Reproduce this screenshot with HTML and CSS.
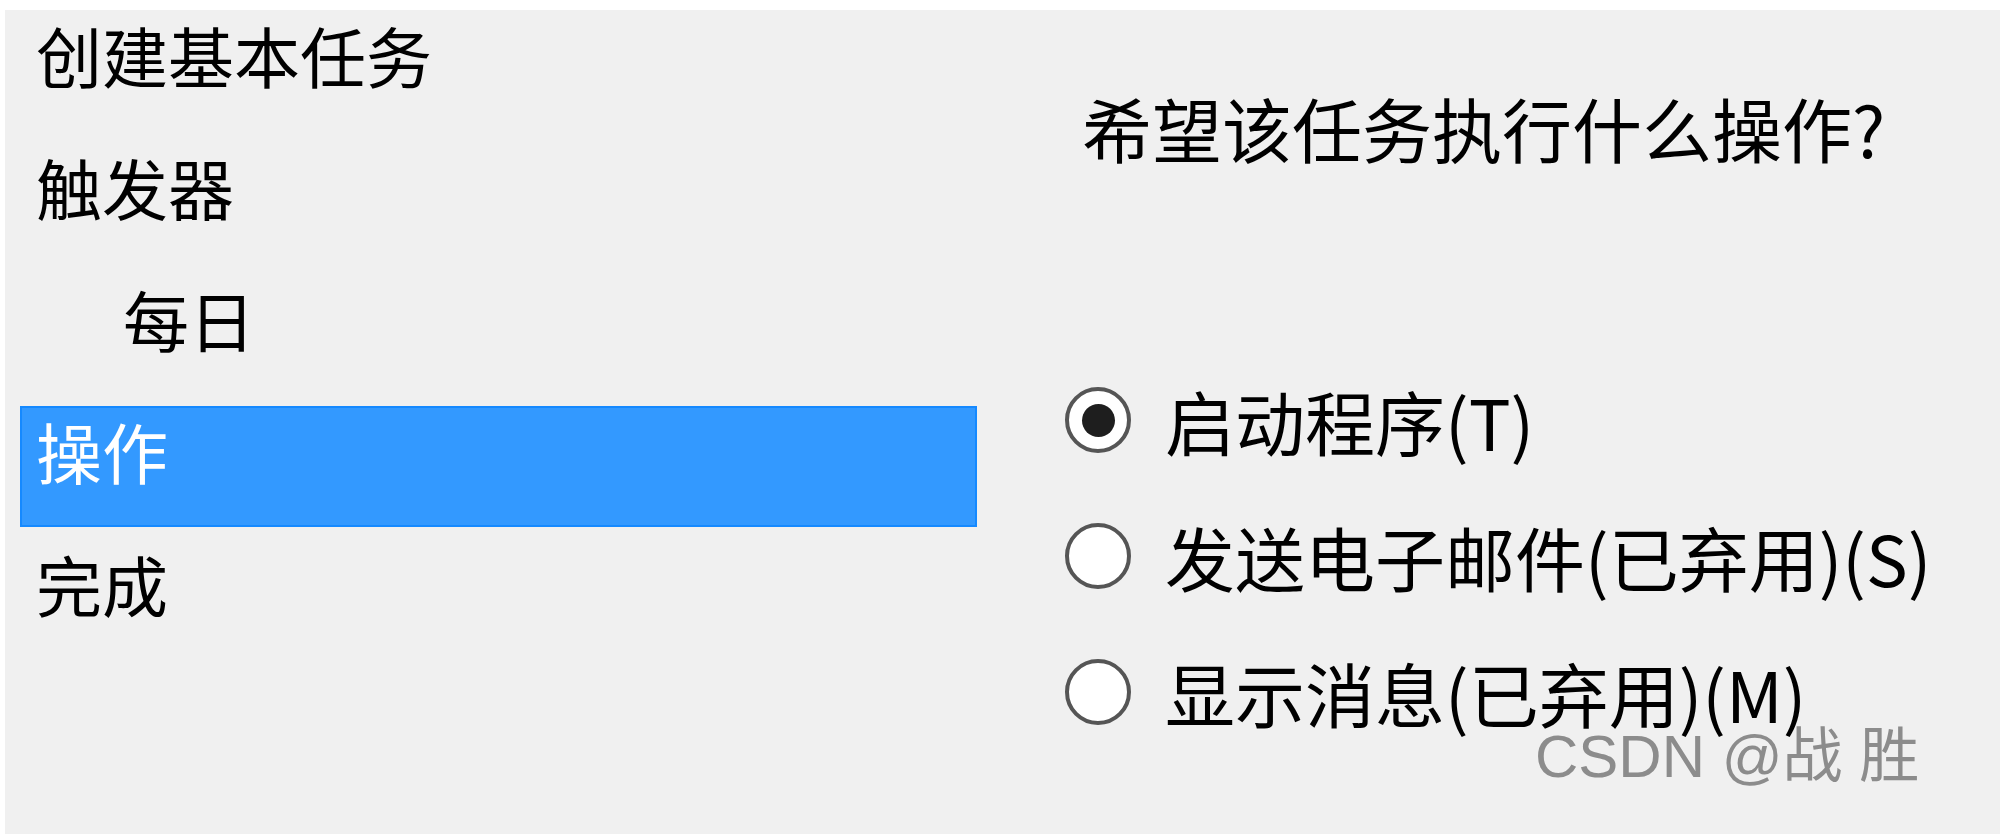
FILE: index.html
```html
<!DOCTYPE html>
<html lang="zh-CN">
<head>
    <meta charset="UTF-8">
    <meta name="viewport" content="width=device-width, initial-scale=1.0">
    <title>创建基本任务向导</title>
    <link rel="stylesheet" href="styles.css">
</head>
<body>
    <div class="window">
        <ul class="steps">
            <li class="step first">创建基本任务</li>
            <li class="step">触发器</li>
            <li class="step sub">每日</li>
            <li class="step active">操作</li>
            <li class="step after">完成</li>
        </ul>
        <div class="content">
            <h1 class="question">希望该任务执行什么操作?</h1>
            <div class="options">
                <label class="option">
                    <span class="radio checked"></span>
                    <span>启动程序(T)</span>
                </label>
                <label class="option">
                    <span class="radio"></span>
                    <span>发送电子邮件(已弃用)(S)</span>
                </label>
                <label class="option">
                    <span class="radio"></span>
                    <span>显示消息(已弃用)(M)</span>
                </label>
            </div>
        </div>
        <div class="watermark">CSDN @战 胜</div>
    </div>
</body>
</html>
```

FILE: styles.css
```css
body {
    margin: 0;
    background-color: #ffffff;
    font-family: "Noto Sans CJK SC", "Noto Sans", sans-serif;
    color: #000000;
    overflow: hidden;
}

.window {
    position: relative;
    display: flex;
    height: 824px;
    margin: 10px 0 0 5px;
    background-color: #f0f0f0;
    overflow: hidden;
}

.steps {
    list-style: none;
    width: 957px;
    margin: 0;
    padding: 0 0 0 15px;
    font-size: 66px;
}

.step {
    display: flex;
    align-items: center;
    height: 132px;
    padding-left: 16px;
    box-sizing: border-box;
    white-space: nowrap;
}

.step.first {
    height: 110px;
    padding-bottom: 22px;
}

.step.sub {
    padding-left: 103px;
}

.step.active {
    align-items: flex-start;
    height: 121px;
    margin-top: 22px;
    line-height: 84px;
    color: #ffffff;
    background-color: #3399ff;
    border: 2px solid #1589ff;
    padding-left: 14px;
}

.step.after {
    height: 112px;
}

.content {
    padding: 78px 0 0 88px;
    font-size: 70px;
}

.question {
    margin: 0 0 184px 0;
    padding-left: 17px;
    font-size: 70px;
    font-weight: normal;
    line-height: 80px;
    white-space: nowrap;
}

.option {
    display: flex;
    align-items: center;
    height: 136px;
    white-space: nowrap;
}

.radio {
    display: flex;
    justify-content: center;
    align-items: center;
    width: 66px;
    height: 66px;
    margin-right: 34px;
    border: 4px solid #555555;
    border-radius: 50%;
    background-color: #ffffff;
    box-sizing: border-box;
}

.radio.checked::after {
    content: "";
    width: 33px;
    height: 33px;
    border-radius: 50%;
    background-color: #1e1e1e;
}

.watermark {
    position: absolute;
    left: 1530px;
    top: 697px;
    font-family: "Liberation Sans", "Noto Sans CJK SC", sans-serif;
    font-size: 60px;
    color: #8c8c8c;
    white-space: nowrap;
}
```
